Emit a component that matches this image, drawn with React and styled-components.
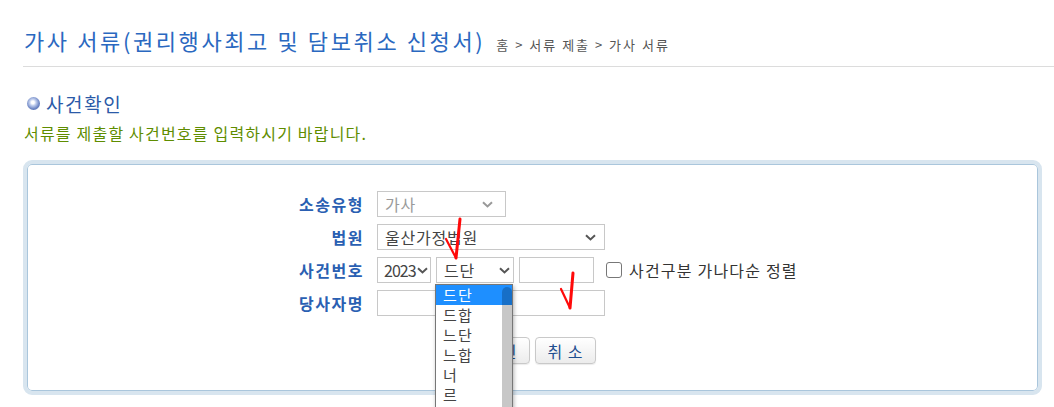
import React from "react";
import styled, { createGlobalStyle } from "styled-components";

const Global = createGlobalStyle`
  html, body { margin: 0; padding: 0; overflow: hidden; background: #fff; }
  body { font-family: "Noto Sans CJK KR", "Noto Sans", sans-serif; color: #333; }
  * { box-sizing: border-box; }
`;

const Page = styled.div`
  position: relative;
  width: 1054px;
  height: 407px;
  padding: 0 12px 0 23px;
  overflow: hidden;
`;

const Header = styled.div`
  display: flex;
  align-items: baseline;
  gap: 11px;
  height: 67px;
  padding: 25px 0 0 1px;
  margin-right: -12px;
  border-bottom: 1px solid #dcdcdc;
`;

const Title = styled.h1`
  margin: 0;
  font-size: 22px;
  font-weight: 400;
  letter-spacing: 2.6px;
  color: #2a68c0;
  line-height: 30px;
`;

const Crumbs = styled.span`
  font-size: 13px;
  letter-spacing: 2px;
  color: #555;
`;

const Section = styled.div`
  display: flex;
  align-items: center;
  gap: 6px;
  margin: 23px 0 0 4px;
  height: 26px;
`;

const Bullet = styled.span`
  width: 13px;
  height: 13px;
  border-radius: 50%;
  background: radial-gradient(circle at 45% 42%, #ffffff 0 14%, #c3d0ee 30%, #7189c6 60%, #3a5598 100%);
`;

const SectionTitle = styled.h2`
  margin: 0;
  font-size: 19px;
  font-weight: 400;
  letter-spacing: 1.6px;
  color: #2b5aa8;
`;

const Guide = styled.p`
  margin: 7px 0 0 1px;
  font-size: 16px;
  letter-spacing: 1.2px;
  color: #5f8d00;
  line-height: 20px;
`;

const Box = styled.div`
  margin-top: 17px;
  width: 1019px;
  height: 235px;
  border: 4px solid #d8e5ef;
  border-radius: 9px;
  box-shadow: inset 0 0 0 1px #aac6dc;
  padding-top: 27px;
`;

const Form = styled.div`
  display: grid;
  grid-template-columns: 336px auto;
  column-gap: 14px;
  row-gap: 7px;
  align-items: center;
`;

const Label = styled.label`
  justify-self: end;
  margin-right: -1px;
  font-size: 16px;
  font-weight: 700;
  letter-spacing: 1.5px;
  color: #2a5fb2;
`;

const Controls = styled.div`
  display: flex;
  align-items: center;
  gap: ${(p) => p.$gap || 5}px;
  height: 26px;
`;

const FakeSelect = styled.div`
  display: flex;
  align-items: center;
  justify-content: space-between;
  width: ${(p) => p.$w}px;
  height: 26px;
  padding: 0 ${(p) => p.$pr ?? 4}px 0 ${(p) => p.$pl ?? 7}px;
  border: 1px solid #c8c8c8;
  background: #fff;
  font-size: 16px;
  letter-spacing: ${(p) => p.$ls ?? 0.8}px;
  color: ${(p) => (p.$disabled ? "#9a9a9a" : "#444")};
  white-space: nowrap;
  overflow: hidden;
`;

const Chevron = ({ color = "#555" }) => (
  <svg width="11" height="7" viewBox="0 0 11 7">
    <path d="M1 1.2 L5.5 5.4 L10 1.2" fill="none" stroke={color} strokeWidth="2" />
  </svg>
);

const TextInput = styled.input`
  width: ${(p) => p.$w}px;
  height: 26px;
  border: 1px solid #c8c8c8;
  padding: 0 4px;
  font: inherit;
  outline: none;
`;

const Check = styled.input.attrs({ type: "checkbox" })`
  appearance: none;
  width: 16px;
  height: 16px;
  margin: 0 0 0 7px;
  border: 1.5px solid #777;
  border-radius: 3px;
  background: #fff;
`;

const CheckLabel = styled.span`
  font-size: 16px;
  letter-spacing: 1.2px;
  color: #333;
  margin-left: 2px;
`;

const Buttons = styled.div`
  display: flex;
  justify-content: center;
  gap: 5px;
  margin-top: 21px;
`;

const Button = styled.button`
  width: 61px;
  height: 27px;
  border: 1px solid #c9c9c9;
  border-radius: 4px;
  background: linear-gradient(#ffffff, #ececec);
  box-shadow: 0 1px 1px rgba(0, 0, 0, 0.08);
  font-family: inherit;
  font-size: 16px;
  letter-spacing: 1px;
  color: #1f4f8f;
  padding: 0;
`;

const Dropdown = styled.ul`
  position: absolute;
  left: 435px;
  top: 284px;
  width: 78px;
  height: 150px;
  margin: 0;
  padding: 0;
  list-style: none;
  background: #fff;
  border: 1px solid #777;
  box-shadow: 1px 2px 4px rgba(0, 0, 0, 0.3);
  overflow: hidden;
`;

const Option = styled.li`
  height: 20px;
  line-height: 20px;
  padding-left: 7px;
  font-size: 15px;
  letter-spacing: 1.2px;
  color: ${(p) => (p.$active ? "#fff" : "#444")};
  background: ${(p) => (p.$active ? "#1e8fff" : "transparent")};
`;

const Thumb = styled.span`
  position: absolute;
  right: 0;
  top: 2px;
  width: 10px;
  bottom: 0;
  border-radius: 5px 5px 0 0;
  background: rgba(0, 0, 0, 0.22);
`;

const Marks = styled.svg`
  position: absolute;
  left: 0;
  top: 0;
  pointer-events: none;
`;

const options = ["드단", "드합", "느단", "느합", "너", "르"];

export default function App() {
  return (
    <Page>
      <Global />
      <Header>
        <Title>가사 서류(권리행사최고 및 담보취소 신청서)</Title>
        <Crumbs>홈 &gt; 서류 제출 &gt; 가사 서류</Crumbs>
      </Header>
      <Section>
        <Bullet />
        <SectionTitle>사건확인</SectionTitle>
      </Section>
      <Guide>서류를 제출할 사건번호를 입력하시기 바랍니다.</Guide>
      <Box>
        <Form>
          <Label>소송유형</Label>
          <Controls>
            <FakeSelect $w={129} $disabled $pr={12}>
              가사 <Chevron color="#999" />
            </FakeSelect>
          </Controls>
          <Label>법원</Label>
          <Controls>
            <FakeSelect $w={228} $pr={8}>
              울산가정법원 <Chevron />
            </FakeSelect>
          </Controls>
          <Label>사건번호</Label>
          <Controls $gap={5}>
            <FakeSelect $w={54} $pl={6} $pr={2} $ls={-1}>
              2023 <Chevron />
            </FakeSelect>
            <FakeSelect $w={78} $pr={3}>
              드단 <Chevron />
            </FakeSelect>
            <TextInput $w={75} />
            <Check />
            <CheckLabel>사건구분 가나다순 정렬</CheckLabel>
          </Controls>
          <Label>당사자명</Label>
          <Controls>
            <TextInput $w={228} />
          </Controls>
        </Form>
        <Buttons>
          <Button>확 인</Button>
          <Button>취 소</Button>
        </Buttons>
      </Box>
      <Dropdown>
        {options.map((o, i) => (
          <Option key={o} $active={i === 0}>
            {o}
          </Option>
        ))}
        <Thumb />
      </Dropdown>
      <Marks width="1054" height="407" viewBox="0 0 1054 407">
        <g fill="none" stroke="#ff0a0a" strokeLinecap="round" strokeLinejoin="round">
          <path d="M446 239 L456 258" strokeWidth="2.2" />
          <path d="M456 258 L460 219" strokeWidth="3" />
          <path d="M561 289 L570 308" strokeWidth="2.2" />
          <path d="M570 308 L573 273" strokeWidth="3" />
        </g>
      </Marks>
    </Page>
  );
}
